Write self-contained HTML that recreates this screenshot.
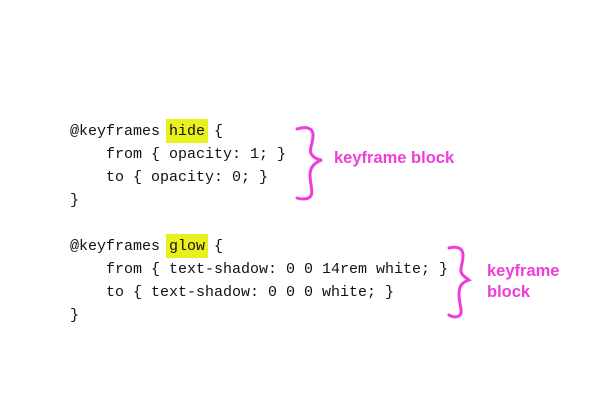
<!DOCTYPE html>
<html><head><style>
body{margin:0;width:600px;height:401px;background:#fff;position:relative;overflow:hidden}
.c{position:absolute;left:70px;font-family:"Liberation Mono",monospace;font-size:15px;color:#111;line-height:23px;white-space:pre}
.h{background:#e8f01e;padding:4px 3px 3px;margin:0 -3px}
.t{position:absolute;font-family:"Liberation Sans",sans-serif;font-weight:bold;font-size:16.5px;color:#f03cd8;line-height:21px}
</style></head><body>
<div class="c" style="top:120px">@keyframes <span class="h">hide</span> {
    from { opacity: 1; }
    to { opacity: 0; }
}</div>
<div class="c" style="top:235px">@keyframes <span class="h">glow</span> {
    from { text-shadow: 0 0 14rem white; }
    to { text-shadow: 0 0 0 white; }
}</div>
<svg style="position:absolute;left:0;top:0" width="600" height="401">
<path d="M297 129 C306 126 313 128 313 135 C313 145 308 150 312 155 C315 159 320 160 322 160 C316 162 310 166 310 175 C310 185 314 193 310 197 C306 200 300 199 297 198" fill="none" stroke="#f03cd8" stroke-width="3" stroke-linecap="round"/>
<path d="M449 248 C457 246 463 248 463 255 C463 265 459 269 462 274 C464 277 468 279 469 280 C463 282 459 285 459 294 C459 304 463 312 460 315 C457 318 452 317 449 315" fill="none" stroke="#f03cd8" stroke-width="3" stroke-linecap="round"/>
</svg>
<div class="t" style="left:334px;top:148px">keyframe block</div>
<div class="t" style="left:487px;top:261px">keyframe<br>block</div>
</body></html>
